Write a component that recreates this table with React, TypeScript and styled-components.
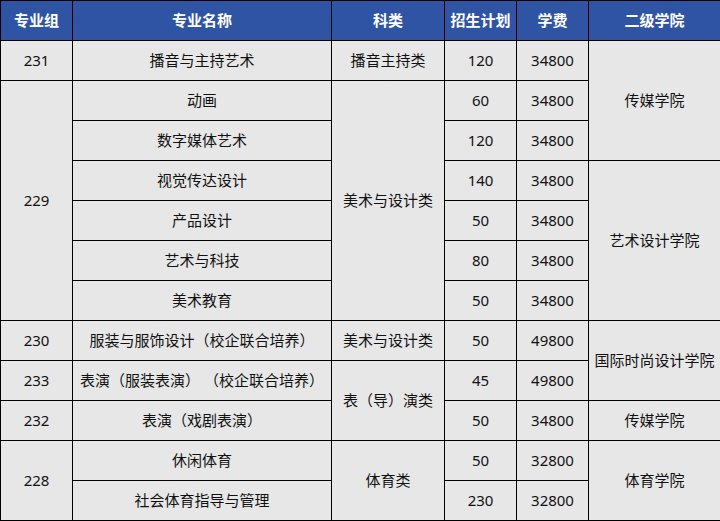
import styled, { createGlobalStyle } from "styled-components";

const GlobalStyle = createGlobalStyle`
  html, body {
    margin: 0;
    padding: 0;
    background: #ffffff;
  }
`;

interface IRow {
  cells: { text: string; rowSpan?: number }[];
}

const HEADERS = ["专业组", "专业名称", "科类", "招生计划", "学费", "二级学院"];
const WIDTHS = [72, 259, 113, 72, 72, 132];

const ROWS: IRow[] = [
  { cells: [{ text: "231" }, { text: "播音与主持艺术" }, { text: "播音主持类" }, { text: "120" }, { text: "34800" }, { text: "传媒学院", rowSpan: 3 }] },
  { cells: [{ text: "229", rowSpan: 6 }, { text: "动画" }, { text: "美术与设计类", rowSpan: 6 }, { text: "60" }, { text: "34800" }] },
  { cells: [{ text: "数字媒体艺术" }, { text: "120" }, { text: "34800" }] },
  { cells: [{ text: "视觉传达设计" }, { text: "140" }, { text: "34800" }, { text: "艺术设计学院", rowSpan: 4 }] },
  { cells: [{ text: "产品设计" }, { text: "50" }, { text: "34800" }] },
  { cells: [{ text: "艺术与科技" }, { text: "80" }, { text: "34800" }] },
  { cells: [{ text: "美术教育" }, { text: "50" }, { text: "34800" }] },
  { cells: [{ text: "230" }, { text: "服装与服饰设计（校企联合培养）" }, { text: "美术与设计类" }, { text: "50" }, { text: "49800" }, { text: "国际时尚设计学院", rowSpan: 2 }] },
  { cells: [{ text: "233" }, { text: "表演（服装表演） （校企联合培养）" }, { text: "表（导）演类", rowSpan: 2 }, { text: "45" }, { text: "49800" }] },
  { cells: [{ text: "232" }, { text: "表演（戏剧表演）" }, { text: "50" }, { text: "34800" }, { text: "传媒学院" }] },
  { cells: [{ text: "228", rowSpan: 2 }, { text: "休闲体育" }, { text: "体育类", rowSpan: 2 }, { text: "50" }, { text: "32800" }, { text: "体育学院", rowSpan: 2 }] },
  { cells: [{ text: "社会体育指导与管理" }, { text: "230" }, { text: "32800" }] },
];

export default function App() {
  return (
    <>
      <GlobalStyle />
      <Table>
        <colgroup>
          {WIDTHS.map((w, i) => (
            <col key={i} style={{ width: w }} />
          ))}
        </colgroup>
        <thead>
          <Row>
            {HEADERS.map((h) => (
              <HeadCell key={h}>{h}</HeadCell>
            ))}
          </Row>
        </thead>
        <tbody>
          {ROWS.map((row, i) => (
            <Row key={i}>
              {row.cells.map((c, j) => (
                <Cell key={j} rowSpan={c.rowSpan}>
                  {c.text}
                </Cell>
              ))}
            </Row>
          ))}
        </tbody>
      </Table>
    </>
  );
}

const Table = styled.table`
  width: 720px;
  table-layout: fixed;
  border-collapse: collapse;
  font-family: "Noto Sans", "Noto Sans CJK SC", sans-serif;
  font-size: 15px;
  line-height: 20px;
  color: #111111;
`;

const Row = styled.tr`
  height: 40px;
`;

const HeadCell = styled.th`
  background: #2f54a3;
  color: #ffffff;
  font-weight: bold;
  border: 1px solid #000000;
  padding: 0 0 2px;
  text-align: center;
  vertical-align: middle;
  white-space: nowrap;
`;

const Cell = styled.td`
  background: #e7e7e7;
  border: 1px solid #000000;
  padding: 0 0 2px;
  text-align: center;
  vertical-align: middle;
  white-space: nowrap;
`;
